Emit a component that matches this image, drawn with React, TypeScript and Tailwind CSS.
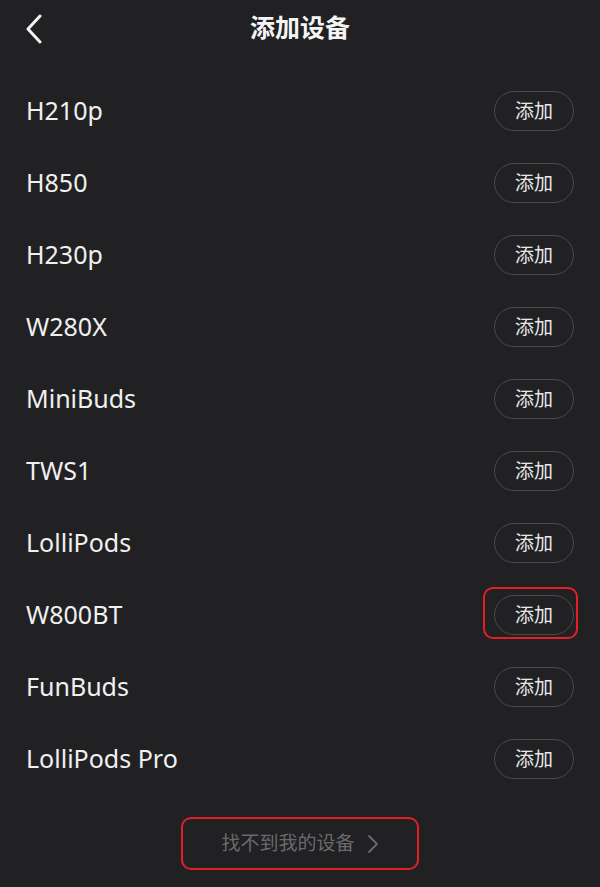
import React from "react"

const devices = [
  "H210p",
  "H850",
  "H230p",
  "W280X",
  "MiniBuds",
  "TWS1",
  "LolliPods",
  "W800BT",
  "FunBuds",
  "LolliPods Pro",
]

const font = { fontFamily: '"Noto Sans", "Noto Sans CJK SC", sans-serif' }

const AddBtn = ({ marked }: { marked?: boolean }) => ( // Add button, optionally outlined in red
  <div className="relative">
    <button
      type="button"
      className="w-[80px] h-[40px] rounded-full border border-[#4a4a4c] text-[19px] text-[#e8e8e8] flex items-center justify-center">
      添加
    </button>
    {marked && (
      <div className="absolute -left-[11px] -right-[4px] -top-[8px] -bottom-[4px] rounded-[10px] border-[2.5px] border-[#e3202a]" />
    )}
  </div>
)

export default function App() {
  return (
    <div className="w-[600px] h-[887px] bg-[#212123] flex flex-col overflow-hidden" style={font}>
      {/* Header */}
      <div className="relative h-[58px] flex items-center justify-center">
        <svg className="absolute left-[24px] top-[14px]" width="20" height="30" viewBox="0 0 20 30" fill="none">
          <path d="M16 2 L4 15 L16 28" stroke="#f2f2f2" strokeWidth="3" strokeLinecap="round" strokeLinejoin="round" />
        </svg>
        <div className="text-[25px] font-bold text-[#f5f5f5] -mt-[2px]">添加设备</div>
      </div>

      {/* Device list */}
      <div className="mt-[17px] flex flex-col">
        {devices.map((name) => (
          <div key={name} className="h-[72px] flex items-center justify-between pl-[26px] pr-[26px]">
            <div className="text-[25px] text-[#f0f0f0]">{name}</div>
            <AddBtn marked={name === "W800BT"} />
          </div>
        ))}
      </div>

      {/* Can't find device */}
      <div className="mt-[22px] flex justify-center">
        <div className="w-[238px] h-[53px] rounded-[10px] border-[2.5px] border-[#e3202a] flex items-center justify-center gap-[12px]">
          <span className="text-[19px] text-[#6a6a6c]">找不到我的设备</span>
          <svg width="12" height="20" viewBox="0 0 12 20" fill="none">
            <path d="M2 2 L10 10 L2 18" stroke="#6a6a6c" strokeWidth="1.8" strokeLinecap="round" strokeLinejoin="round" />
          </svg>
        </div>
      </div>
    </div>
  )
}
